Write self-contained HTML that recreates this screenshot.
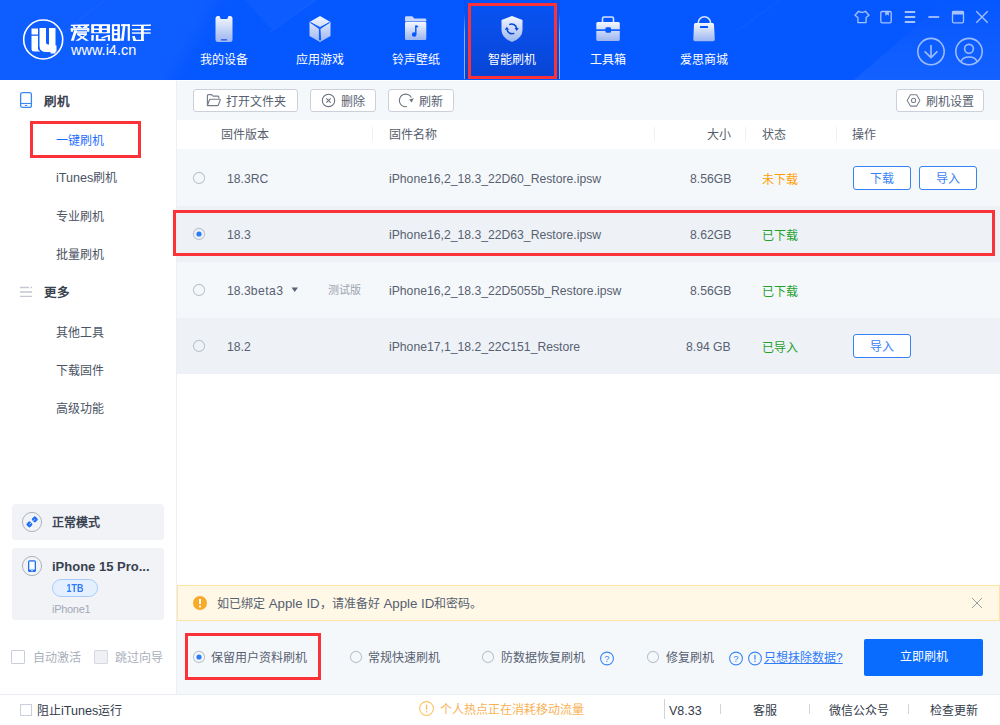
<!DOCTYPE html>
<html lang="zh-CN"><head><meta charset="utf-8">
<style>
*{box-sizing:border-box;}
html,body{margin:0;padding:0;width:1000px;height:725px;overflow:hidden;background:#fff;}
body{font-family:"Liberation Sans",sans-serif;font-size:12px;color:#566071;position:relative;}
.a{position:absolute;white-space:nowrap;line-height:1;}
svg{position:absolute;overflow:visible;}
/* header */
#hdr{position:absolute;left:0;top:0;width:1000px;height:80px;background:#0557ff;overflow:hidden;}
.nav{position:absolute;top:0;width:96px;height:80px;}
.nav .lbl{position:absolute;left:0;width:96px;top:52px;text-align:center;color:#fff;font-size:12px;line-height:16px;}
.wc{stroke:#a6c2ff;fill:none;stroke-width:1.3;}
/* sidebar */
.sb{color:#4a5363;font-size:12px;line-height:16px;}
.red{position:absolute;border:3px solid #fb3338;}
.btn{position:absolute;height:23px;border:1px solid #cbd1da;border-radius:3px;background:#fff;}
.th{position:absolute;top:127px;font-size:12px;line-height:16px;color:#555d6b;}
.sep{position:absolute;top:127px;width:1px;height:14px;background:#eef0f4;}
.row{position:absolute;left:177px;width:823px;height:56px;}
.cell{position:absolute;font-size:12.2px;line-height:16px;color:#586171;}
.radio{position:absolute;width:12px;height:12px;border:1.2px solid #bdc4ce;border-radius:50%;}
.radio.on::after{content:"";position:absolute;left:2.3px;top:2.3px;width:5.4px;height:5.4px;border-radius:50%;background:#2a7cf7;}
.obtn{position:absolute;width:58px;height:24px;border:1px solid #3583f7;border-radius:3px;background:#fff;color:#3b82f6;text-align:center;line-height:24px;font-size:12px;}
</style></head><body>

<!-- HEADER -->
<div id="hdr">
  <svg width="1000" height="80" style="left:0;top:0">
    <defs><linearGradient id="lg1" x1="0" y1="1" x2="0" y2="0"><stop offset="0" stop-color="#fff" stop-opacity="0.06"/><stop offset="1" stop-color="#fff" stop-opacity="0"/></linearGradient>
    <filter id="bl" x="-50%" y="-50%" width="200%" height="200%"><feGaussianBlur stdDeviation="8"/></filter></defs>
    <polygon points="-40,-20 230,-20 160,100 -40,100" fill="#ffffff" opacity="0.035" filter="url(#bl)"/>
    <polygon points="245,0 316,0 272,30" fill="#ffffff" opacity="0.035"/>
    <line x1="316" y1="0" x2="270" y2="32" stroke="#ffffff" stroke-opacity="0.07" stroke-width="1"/>
    <line x1="105" y1="0" x2="60" y2="35" stroke="#ffffff" stroke-opacity="0.05" stroke-width="1"/>
    <line x1="780" y1="0" x2="737" y2="31" stroke="#ffffff" stroke-opacity="0.05" stroke-width="1"/>
    <polygon points="854,80 947,0 1000,0 1000,80" fill="url(#lg1)"/>
  </svg>
  <!-- logo -->
  <svg width="60" height="60" style="left:13px;top:10px">
    <circle cx="30.2" cy="29.5" r="19.5" fill="none" stroke="#fff" stroke-width="1.6"/>
    <path d="M18.5 18.5 h6.5 v6 h-6.5 z" fill="#fff"/>
    <path d="M18.5 25.7 h6.5 v13 q0 2 2 2.3 v0.5 h-6 q-2.5 0 -2.5 -2.5 z" fill="#fff"/>
    <path d="M26.5 18 h6.5 v14.5 q0 2 2 2 h1 v-16.5 h6.5 v17.5 h1 v6 h-1 v2 h-5 v-1.5 h-4 q-7 0 -7 -6 z" fill="#fff"/>
  </svg>
  <svg width="90" height="22" style="left:68px;top:22px" viewBox="68 22 90 22" shape-rendering="geometricPrecision">
    <g fill="#fff">
      <!-- 爱 -->
      <polygon points="70.8,24.7 88.4,24.3 89.1,24.1 89.1,25.9 70.8,25.9"/>
      <polygon points="72.6,25.9 87.6,25.9 87.2,28.3 73.6,28.3"/>
      <rect x="70.8" y="28.3" width="18.4" height="2"/>
      <rect x="70.8" y="28.3" width="2.2" height="3.4"/>
      <rect x="87" y="28.3" width="2.2" height="3.4"/>
      <rect x="73.8" y="31.1" width="13.2" height="2.2" fill-opacity="0.82"/>
      <polygon points="74.3,30.3 77.2,30.3 73.8,40.8 70.9,40.8"/>
      <polygon points="77.1,33.3 87,33.3 87,35 77.1,35"/>
      <polygon points="77.1,34.8 80.2,34.8 89,40.8 85.6,40.8"/>
      <polygon points="84.6,34.8 87,34.8 78.8,40.8 75.4,40.8"/>
      <!-- 思 -->
      <rect x="91.2" y="24.2" width="18.8" height="9.1"/>
      <polygon points="91.4,35 93.8,35 93.6,40.8 91.2,40.8"/>
      <rect x="95.9" y="35" width="2.5" height="5.8"/>
      <rect x="95.9" y="39.1" width="9.6" height="1.7"/>
      <polygon points="101.1,37.4 108.2,35 108.2,36.6 101.8,38.8"/>
      <rect x="107.9" y="35" width="2.1" height="5.8"/>
      <!-- 助 -->
      <rect x="111.9" y="24.2" width="8" height="16.6"/>
      <polygon points="111.9,39.4 120.8,38.6 120.8,40.8 111.9,40.8"/>
      <rect x="121" y="24.2" width="8.9" height="1.9"/>
      <polygon points="123,24.2 125.5,24.2 123.8,40.8 121,40.8"/>
      <rect x="127.7" y="24.2" width="2.2" height="16.6"/>
      <!-- 手 -->
      <polygon points="131.9,24.7 149.5,24.5 150.7,23.9 150.7,25.9 131.9,25.9"/>
      <rect x="131.9" y="28.9" width="18.8" height="1.4"/>
      <rect x="131.9" y="32.2" width="18.8" height="1.7" fill-opacity="0.8"/>
      <rect x="141" y="25.6" width="2.8" height="15.2"/>
      <polygon points="132.2,36.1 134.7,36.1 136.1,39.8 143.8,39.8 143.8,41 133.3,41"/>
    </g>
    <g fill="#0557ff">
      <polygon points="74.6,25.9 78.2,25.9 76.6,28"/>
      <polygon points="79.9,25.9 84.6,25.9 82.2,28"/>
      <polygon points="79.9,35 84.8,35 82.3,36.4"/>
      <rect x="94" y="25.9" width="4.9" height="2.7" rx="0.6"/>
      <rect x="102" y="25.9" width="4.9" height="2.7" rx="0.6"/>
      <rect x="94" y="30" width="4.9" height="2.2" rx="0.6"/>
      <rect x="102" y="30" width="4.9" height="2.2" rx="0.6"/>
      <rect x="114.1" y="25.9" width="3.3" height="3.5" rx="0.6"/>
      <rect x="114.1" y="31.1" width="3.3" height="2.2" rx="0.6"/>
      <rect x="114.1" y="35" width="3.3" height="3.4" rx="0.6"/>
    </g>
  </svg>
  <div class="a" style="left:71px;top:43px;font-size:14.5px;color:#fff;">www.i4.cn</div>

  <!-- nav items -->
  <div class="nav" style="left:176px">
    <svg width="96" height="50" style="left:0;top:0">
      <defs><linearGradient id="g1" x1="0" y1="0" x2="0" y2="1"><stop offset="0" stop-color="#f4f7ff"/><stop offset="1" stop-color="#9cb6f0"/></linearGradient></defs>
      <rect x="39.5" y="16" width="17" height="26" rx="2.5" fill="url(#g1)"/>
      <path d="M43.5 16 h9 l-1.2 3 h-6.6 z" fill="#0557ff"/>
      <rect x="45" y="39" width="6" height="1.6" fill="#3a6cf0"/>
    </svg>
    <div class="lbl">我的设备</div>
  </div>
  <div class="nav" style="left:272px">
    <svg width="96" height="50" style="left:0;top:0">
      <path d="M48 16 L58.5 22 V36 L48 42 L37.5 36 V22 Z" fill="url(#g1)"/>
      <path d="M38.5 22.5 L48 27.5 L57.5 22.5 L48 28.8 L48.6 40 h-1.2 L47.4 28.8 Z" fill="#0557ff" stroke="#0557ff" stroke-width="0.8" stroke-linejoin="round"/>
    </svg>
    <div class="lbl">应用游戏</div>
  </div>
  <div class="nav" style="left:368px">
    <svg width="96" height="50" style="left:0;top:0">
      <path d="M37 17.5 q0-1.3 1.3-1.3 h6 l2 2.3 h10.7 q1.3 0 1.3 1.3 V21.5 H37 Z" fill="#c9d7fb"/>
      <rect x="37" y="22" width="21.3" height="18" rx="1.3" fill="url(#g1)"/>
      <path d="M47.8 25.5 v8.5" stroke="#0557ff" stroke-width="1.4"/>
      <circle cx="46.2" cy="34.5" r="2.3" fill="#0557ff"/>
      <path d="M47.8 25.2 q2.5 0 2.7 1.8 q-1.5 0.2 -2.7 0.5 z" fill="#0557ff"/>
    </svg>
    <div class="lbl">铃声壁纸</div>
  </div>
  <div class="nav" style="left:464px;height:79px;background:linear-gradient(#0553f6,#0a4ee8 40%,#0744d4);">
    <svg width="96" height="50" style="left:0;top:0">
      <path d="M48 16 L58.5 20 V30 Q58.5 38 48 42 Q37.5 38 37.5 30 V20 Z" fill="url(#g1)"/>
      <path d="M45.3 24.6 A5 5 0 0 1 52.6 28.2" fill="none" stroke="#0646d8" stroke-width="1.5"/>
      <path d="M50.3 33.2 A5 5 0 0 1 43 29.6" fill="none" stroke="#0646d8" stroke-width="1.5"/>
      <path d="M50.6 28 h4.2 l-2.1 3 z" fill="#0646d8"/>
      <path d="M40.8 29.8 h4.2 l-2.1 -3 z" fill="#0646d8"/>
    </svg>
    <div class="lbl">智能刷机</div>
  </div>
  <div class="nav" style="left:560px">
    <svg width="96" height="50" style="left:0;top:0">
      <rect x="42.5" y="17" width="11" height="6" rx="1.5" fill="none" stroke="#d6e1fc" stroke-width="1.6"/>
      <rect x="36.3" y="22" width="23.5" height="19" rx="1.5" fill="url(#g1)"/>
      <rect x="36" y="29.3" width="24" height="1.6" fill="#0557ff"/>
      <rect x="45.5" y="27.3" width="5.5" height="5.5" rx="1.2" fill="#0557ff"/>
    </svg>
    <div class="lbl">工具箱</div>
  </div>
  <div class="nav" style="left:656px">
    <svg width="96" height="50" style="left:0;top:0">
      <path d="M42.2 23 a6.2 6.2 0 0 1 12.4 0" fill="none" stroke="#d6e1fc" stroke-width="1.6"/>
      <path d="M38 24.5 q0-1.5 1.5-1.5 h17 q1.5 0 1.5 1.5 l0.8 15 q0 1.8 -1.8 1.8 h-17.9 q-1.8 0 -1.8 -1.8 z" fill="url(#g1)"/>
      <rect x="44" y="26" width="8" height="2" rx="0.5" fill="#0557ff"/>
    </svg>
    <div class="lbl">爱思商城</div>
  </div>
  <div style="position:absolute;left:464px;top:13px;width:1px;height:66px;background:linear-gradient(rgba(160,192,255,0),rgba(160,192,255,0.85) 30%,rgba(160,192,255,0.85))"></div>
  <div style="position:absolute;left:559px;top:13px;width:1px;height:66px;background:linear-gradient(rgba(160,192,255,0),rgba(160,192,255,0.85) 30%,rgba(160,192,255,0.85))"></div>
  <div class="red" style="left:468px;top:3px;width:89px;height:76px"></div>

  <!-- window controls -->
  <svg width="140" height="30" style="left:850px;top:5px">
    <path class="wc" d="M8.6 6.2 Q12 8.6 15.4 6.2 L19 10.3 L16.1 12.5 V17.6 H7.9 V12.5 L5 10.3 Z" stroke-linejoin="round"/>
    <rect class="wc" x="30.8" y="6.5" width="10.4" height="11.4" rx="1.3"/>
    <path d="M35.3 6 h3.6 v4.8 l-1.8 -1.3 l-1.8 1.3 z" fill="#a6c2ff"/>
    <path d="M54.8 7 h10.4 M54.8 12 h10.4 M54.8 17 h10.4" stroke="#a6c2ff" stroke-width="1.8"/>
    <path d="M78.4 12 h10.8" stroke="#a6c2ff" stroke-width="1.8"/>
    <rect class="wc" x="102.5" y="6.5" width="11" height="11.4" rx="1.3"/>
    <rect x="102" y="6" width="12" height="3.5" rx="1" fill="#a6c2ff"/>
    <path class="wc" d="M126.3 6.3 l11.4 11.4 M137.7 6.3 l-11.4 11.4"/>
  </svg>
  <svg width="80" height="40" style="left:910px;top:32px">
    <circle cx="21" cy="19.6" r="13.2" fill="none" stroke="#9dbcff" stroke-width="1.6"/>
    <path d="M21 13 v12.6 M14.6 19.4 l6.4 6.2 l6.4 -6.2" fill="none" stroke="#9dbcff" stroke-width="1.6" stroke-linejoin="round"/>
    <circle cx="59" cy="19.6" r="13.2" fill="none" stroke="#9dbcff" stroke-width="1.6"/>
    <circle cx="59" cy="16.8" r="4.4" fill="none" stroke="#9dbcff" stroke-width="1.6"/>
    <path d="M51 29.6 q1.5 -4.6 8 -4.6 q6.5 0 8 4.6" fill="none" stroke="#9dbcff" stroke-width="1.6"/>
  </svg>
</div>

<!-- SIDEBAR -->
<div id="sidebar">
  <svg width="20" height="20" style="left:18px;top:90px">
    <rect x="2.6" y="2.6" width="10.8" height="14.8" rx="2" fill="none" stroke="#3a86f5" stroke-width="1.3"/>
    <path d="M2.6 13.5 h10.8" stroke="#3a86f5" stroke-width="1.1"/>
    <rect x="6.8" y="15" width="2.4" height="1" fill="#3a86f5"/>
  </svg>
  <div class="a" style="left:44px;top:93.5px;font-size:12.5px;line-height:16px;color:#3a4251;font-weight:bold">刷机</div>
  <div class="a sb" style="left:56px;top:132.5px;color:#1f6fff">一键刷机</div>
  <div class="red" style="left:30px;top:121px;width:111px;height:37px"></div>
  <div class="a sb" style="left:56px;top:169.5px"><span style="font-size:12.6px">iTunes</span>刷机</div>
  <div class="a sb" style="left:56px;top:208.5px">专业刷机</div>
  <div class="a sb" style="left:56px;top:246.5px">批量刷机</div>
  <svg width="20" height="20" style="left:18px;top:282px">
    <path d="M2 5.5 h9 M12.5 5.5 h1.5 M2 10 h12 M2 14.3 h12" stroke="#c3c8d2" stroke-width="1.3"/>
  </svg>
  <div class="a" style="left:44px;top:285px;font-size:12.5px;line-height:16px;color:#3a4251;font-weight:bold">更多</div>
  <div class="a sb" style="left:56px;top:324.5px">其他工具</div>
  <div class="a sb" style="left:56px;top:362.5px">下载固件</div>
  <div class="a sb" style="left:56px;top:400.5px">高级功能</div>

  <div style="position:absolute;left:12px;top:504px;width:152px;height:36px;background:#f1f3f7;border-radius:4px"></div>
  <svg width="24" height="24" style="left:20px;top:510px">
    <circle cx="12" cy="12" r="9.6" fill="#fff" fill-opacity="0" stroke="#a2a9b4" stroke-width="0.9"/>
    <rect x="12.3" y="6.9" width="5" height="5" rx="1.3" fill="#1f6ff5" transform="rotate(45 14.8 9.4)"/>
    <rect x="6.9" y="11.9" width="5" height="5" rx="1.3" fill="#1f6ff5" transform="rotate(45 9.4 14.4)"/>
    <path d="M13.6 10.6 l1.2 -1.2 M10.6 13.2 l-1.2 1.2" stroke="#fff" stroke-width="1"/>
  </svg>
  <div class="a" style="left:52px;top:515px;font-size:12px;line-height:16px;color:#3a4252;font-weight:bold">正常模式</div>

  <div style="position:absolute;left:12px;top:548px;width:152px;height:72px;background:#f1f3f7;border-radius:4px"></div>
  <svg width="24" height="24" style="left:20px;top:554px">
    <circle cx="12" cy="12" r="9.6" fill="none" stroke="#a2a9b4" stroke-width="0.9"/>
    <rect x="8" y="6.2" width="8" height="11.8" rx="1.6" fill="#1f6ff5"/>
    <rect x="9.3" y="7.6" width="5.4" height="8" fill="#fff"/>
    <rect x="11" y="16.4" width="2" height="0.8" fill="#fff"/>
  </svg>
  <div class="a" style="left:52px;top:559px;font-size:13px;line-height:16px;color:#39414f;font-weight:bold">iPhone 15 Pro...</div>
  <div style="position:absolute;left:52px;top:579px;width:46px;height:18px;border:1px solid #a9cdfb;background:#e4efff;border-radius:9px;color:#2f7cf6;font-size:10.5px;font-weight:bold;line-height:16px;text-align:center"><span style="display:inline-block;transform:scaleX(0.86)">1TB</span></div>
  <div class="a" style="left:52px;top:603px;font-size:11px;letter-spacing:-0.3px;line-height:13px;color:#a3aab6">iPhone1</div>

  <div style="position:absolute;left:11px;top:650px;width:14px;height:14px;border:1px solid #c8cfda;background:#fff;border-radius:1px"></div>
  <div class="a" style="left:32.5px;top:650px;font-size:12px;line-height:16px;color:#a9b0bb">自动激活</div>
  <div style="position:absolute;left:94px;top:650px;width:14px;height:14px;border:1px solid #d5dae2;background:#eef0f4;border-radius:1px"></div>
  <div class="a" style="left:115px;top:650px;font-size:12px;line-height:16px;color:#a9b0bb">跳过向导</div>
</div>

<!-- MAIN -->
<div id="main">
  <div style="position:absolute;left:176px;top:80px;width:824px;height:614px;background:#fff;border-left:1px solid #ecf0f5"></div>
  <div style="position:absolute;left:177px;top:81px;width:823px;height:39px;background:#f5f8fb"></div>
  <!-- toolbar buttons -->
  <div class="btn" style="left:193px;top:89px;width:105px"></div>
  <svg width="20" height="20" style="left:204px;top:90px">
    <path d="M3.4 15.6 V5.6 q0-1 1-1 h3.2 l1.5 1.5 h4.6 q0.8 0 1 0.8 l0.3 1.6" fill="none" stroke="#737c89" stroke-width="1.15" stroke-linejoin="round"/>
    <path d="M3.4 15.6 l2 -5.6 q0.3 -0.8 1.1 -0.8 h9.2 q0.8 0 0.5 0.9 l-1.8 4.9 q-0.2 0.6 -0.9 0.6 z" fill="none" stroke="#737c89" stroke-width="1.15" stroke-linejoin="round"/>
  </svg>
  <div class="a" style="left:226px;top:94px;font-size:12px;line-height:16px;color:#566071">打开文件夹</div>
  <div class="btn" style="left:310px;top:89px;width:66px"></div>
  <svg width="20" height="20" style="left:318px;top:90px">
    <circle cx="10.5" cy="10.4" r="6.2" fill="none" stroke="#646d7a" stroke-width="1.05"/>
    <path d="M8.3 8.3 l4.4 4.3 M12.7 8.3 l-4.4 4.3" stroke="#646d7a" stroke-width="1.05"/>
  </svg>
  <div class="a" style="left:341px;top:94px;font-size:12px;line-height:16px;color:#566071">删除</div>
  <div class="btn" style="left:388px;top:89px;width:66px"></div>
  <svg width="20" height="20" style="left:396px;top:90px">
    <path d="M11 16.6 A6.3 6.3 0 1 1 15.3 7.6" fill="none" stroke="#69727f" stroke-width="1.05"/>
    <path d="M13.2 9.6 l4.6 -1.4 l-2.2 4.2 z" fill="#69727f"/>
  </svg>
  <div class="a" style="left:419px;top:94px;font-size:12px;line-height:16px;color:#566071">刷新</div>
  <div class="btn" style="left:896px;top:89px;width:88px"></div>
  <svg width="20" height="20" style="left:904px;top:90px">
    <path d="M6.4 4.7 h6.3 l3.2 5.7 l-3.2 5.7 h-6.3 l-3.2 -5.7 z" fill="none" stroke="#7b8390" stroke-width="1.05" stroke-linejoin="round"/>
    <circle cx="9.55" cy="10.4" r="2.1" fill="none" stroke="#7b8390" stroke-width="1.05"/>
  </svg>
  <div class="a" style="left:926px;top:94px;font-size:12px;line-height:16px;color:#566071">刷机设置</div>

  <!-- table header -->
  <div class="th" style="left:221px">固件版本</div>
  <div class="sep" style="left:372px"></div>
  <div class="th" style="left:389px">固件名称</div>
  <div class="sep" style="left:654px"></div>
  <div class="th" style="left:707px">大小</div>
  <div class="sep" style="left:745px"></div>
  <div class="th" style="left:762px">状态</div>
  <div class="sep" style="left:836px"></div>
  <div class="th" style="left:852px">操作</div>

  <!-- rows -->
  <div class="row" style="top:149px;height:57px;background:#f5f8fb"></div>
  <div class="row" style="top:206px;background:#eef2f7"></div>
  <div class="row" style="top:262px;background:#f5f8fb"></div>
  <div class="row" style="top:318px;background:#eef2f7"></div>

  <svg width="16" height="16" style="left:191.0px;top:169.7px"><circle cx="8" cy="8" r="5.6" fill="none" stroke="#bdc4ce" stroke-width="1.1"/></svg>
  <div class="cell" style="left:227px;top:171px">18.3RC</div>
  <div class="cell" style="left:389px;top:171px">iPhone16,2_18.3_22D60_Restore.ipsw</div>
  <div class="cell" style="left:690px;top:171px">8.56GB</div>
  <div class="cell" style="left:762px;top:172px;color:#ff9e00;font-size:12px">未下载</div>
  <div class="obtn" style="left:853px;top:166px">下载</div>
  <div class="obtn" style="left:919px;top:166px">导入</div>

  <svg width="16" height="16" style="left:191.0px;top:225.7px"><circle cx="8" cy="8" r="5.6" fill="none" stroke="#bdc4ce" stroke-width="1.1"/><circle cx="8" cy="8" r="2.6" fill="#2a7cf7"/></svg>
  <div class="cell" style="left:227px;top:227px">18.3</div>
  <div class="cell" style="left:389px;top:227px">iPhone16,2_18.3_22D63_Restore.ipsw</div>
  <div class="cell" style="left:690px;top:227px">8.62GB</div>
  <div class="cell" style="left:762px;top:228px;color:#1fa12e;font-size:12px">已下载</div>
  <div class="red" style="left:173px;top:210px;width:822px;height:46px"></div>

  <svg width="16" height="16" style="left:191.0px;top:281.7px"><circle cx="8" cy="8" r="5.6" fill="none" stroke="#bdc4ce" stroke-width="1.1"/></svg>
  <div class="cell" style="left:227px;top:283px">18.3<span style="letter-spacing:0.45px">beta3</span></div>
  <svg width="8" height="6" style="left:291px;top:287px"><path d="M0.5 0.5 h6.5 l-3.25 4.5 z" fill="#5a6474"/></svg>
  <div class="a" style="left:328px;top:283px;font-size:11px;line-height:14px;color:#9ca4b0">测试版</div>
  <div class="cell" style="left:389px;top:283px">iPhone16,2_18.3_22D5055b_Restore.ipsw</div>
  <div class="cell" style="left:690px;top:283px">8.56GB</div>
  <div class="cell" style="left:762px;top:284px;color:#1fa12e;font-size:12px">已下载</div>

  <svg width="16" height="16" style="left:191.0px;top:337.7px"><circle cx="8" cy="8" r="5.6" fill="none" stroke="#bdc4ce" stroke-width="1.1"/></svg>
  <div class="cell" style="left:227px;top:339px">18.2</div>
  <div class="cell" style="left:389px;top:339px">iPhone17,1_18.2_22C151_Restore</div>
  <div class="cell" style="left:686px;top:339px">8.94 GB</div>
  <div class="cell" style="left:762px;top:340px;color:#1fa12e;font-size:12px">已导入</div>
  <div class="obtn" style="left:853px;top:334px">导入</div>

  <!-- warning -->
  <div style="position:absolute;left:177px;top:585px;width:823px;height:36px;background:#fff8e6;border:1px solid #fde4a3"></div>
  <svg width="16" height="16" style="left:192px;top:595px">
    <circle cx="8" cy="8" r="7" fill="#f7a928"/>
    <rect x="7" y="3.8" width="2" height="5.5" rx="0.8" fill="#fff"/>
    <circle cx="8" cy="11.5" r="1.1" fill="#fff"/>
  </svg>
  <div class="a" style="left:217px;top:596px;font-size:12px;line-height:16px;color:#566071">如已绑定<span style="font-size:13.3px"> Apple ID</span>，请准备好<span style="font-size:13.3px"> Apple ID</span>和密码。</div>
  <svg width="14" height="14" style="left:970px;top:596px">
    <path d="M2 2 l10 10 M12 2 l-10 10" stroke="#979ea8" stroke-width="1"/>
  </svg>

  <!-- options -->
  <div style="position:absolute;left:177px;top:621px;width:823px;height:73px;background:#f5f8fb"></div>
  <svg width="16" height="16" style="left:190.5px;top:648.5px"><circle cx="8" cy="8" r="5.6" fill="none" stroke="#bdc4ce" stroke-width="1.1"/><circle cx="8" cy="8" r="2.6" fill="#2a7cf7"/></svg>
  <div class="a" style="left:211px;top:650px;font-size:12px;line-height:16px;color:#566071">保留用户资料刷机</div>
  <div class="red" style="left:185px;top:633px;width:136px;height:47px"></div>
  <svg width="16" height="16" style="left:347.5px;top:648.5px"><circle cx="8" cy="8" r="5.6" fill="none" stroke="#bdc4ce" stroke-width="1.1"/></svg>
  <div class="a" style="left:368px;top:650px;font-size:12px;line-height:16px;color:#566071">常规快速刷机</div>
  <svg width="16" height="16" style="left:480.0px;top:648.5px"><circle cx="8" cy="8" r="5.6" fill="none" stroke="#bdc4ce" stroke-width="1.1"/></svg>
  <div class="a" style="left:501px;top:650px;font-size:12px;line-height:16px;color:#566071">防数据恢复刷机</div>
  <svg width="14" height="14" style="left:600px;top:650px">
    <circle cx="7" cy="8.5" r="6.4" fill="none" stroke="#3d87f5" stroke-width="1.1"/>
    <text x="7" y="11.8" font-size="9.5" text-anchor="middle" fill="#3d87f5" font-family="Liberation Sans">?</text>
  </svg>
  <svg width="16" height="16" style="left:645.0px;top:648.5px"><circle cx="8" cy="8" r="5.6" fill="none" stroke="#bdc4ce" stroke-width="1.1"/></svg>
  <div class="a" style="left:666px;top:650px;font-size:12px;line-height:16px;color:#566071">修复刷机</div>
  <svg width="14" height="14" style="left:729px;top:650px">
    <circle cx="7" cy="8.5" r="6.4" fill="none" stroke="#3d87f5" stroke-width="1.1"/>
    <text x="7" y="11.8" font-size="9.5" text-anchor="middle" fill="#3d87f5" font-family="Liberation Sans">?</text>
  </svg>
  <svg width="14" height="14" style="left:748px;top:650px">
    <circle cx="7" cy="8.5" r="6.4" fill="none" stroke="#3d87f5" stroke-width="1.1"/>
    <rect x="6.4" y="4.8" width="1.2" height="4.8" fill="#3d87f5"/>
    <rect x="6.4" y="10.7" width="1.2" height="1.3" fill="#3d87f5"/>
  </svg>
  <div class="a" style="left:764px;top:650px;font-size:12px;line-height:16px;color:#2f7cf6;text-decoration:underline">只想抹除数据?</div>
  <div style="position:absolute;left:864px;top:639px;width:119px;height:37px;background:#0a6cff;border-radius:2px;color:#fff;font-size:12px;line-height:37px;text-align:center">立即刷机</div>
</div>

<!-- FOOTER -->
<div id="footer">
  <div style="position:absolute;left:0;top:694px;width:1000px;height:1px;background:#e9ecf2"></div>
  <div style="position:absolute;left:20px;top:704px;width:12px;height:12px;border:1px solid #c8cfda;background:#fff"></div>
  <div class="a" style="left:37px;top:703px;font-size:12px;line-height:16px;color:#333b4a">阻止<span style="font-size:12.6px">iTunes</span>运行</div>
  <svg width="16" height="16" style="left:418px;top:700px">
    <circle cx="8.5" cy="8.5" r="6.9" fill="none" stroke="#fcc467" stroke-width="1.1"/>
    <rect x="7.9" y="4.6" width="1.3" height="5.2" rx="0.5" fill="#fbbb55"/>
    <rect x="7.9" y="11" width="1.3" height="1.4" fill="#fbbb55"/>
  </svg>
  <div class="a" style="left:440px;top:702px;font-size:12px;line-height:16px;color:#f8b155">个人热点正在消耗移动流量</div>
  <div style="position:absolute;left:664px;top:699px;width:1px;height:20px;background:#cfd4dc"></div>
  <div class="a" style="left:669px;top:703px;font-size:12.5px;line-height:16px;color:#333b4a">V8.33</div>
  <div style="position:absolute;left:720px;top:704px;width:1px;height:10px;background:#cfd4dc"></div>
  <div class="a" style="left:753px;top:702.5px;font-size:12px;line-height:16px;color:#333b4a">客服</div>
  <div style="position:absolute;left:809px;top:704px;width:1px;height:10px;background:#cfd4dc"></div>
  <div class="a" style="left:829px;top:702.5px;font-size:12px;line-height:16px;color:#333b4a">微信公众号</div>
  <div style="position:absolute;left:908px;top:704px;width:1px;height:10px;background:#cfd4dc"></div>
  <div class="a" style="left:930px;top:702.5px;font-size:12px;line-height:16px;color:#333b4a">检查更新</div>
</div>

</body></html>
